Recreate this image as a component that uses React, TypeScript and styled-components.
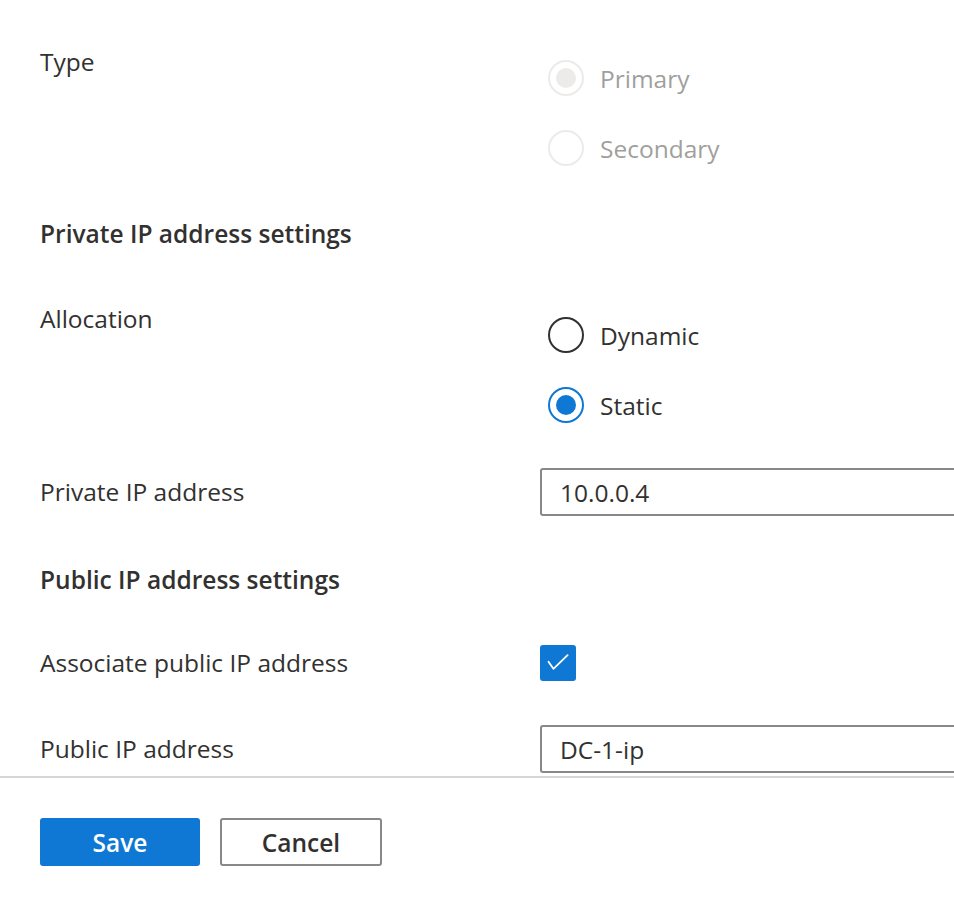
import React from "react";
import styled, { createGlobalStyle } from "styled-components";

const GlobalStyle = createGlobalStyle`
  html, body {
    margin: 0;
    padding: 0;
    background: #ffffff;
    overflow: hidden;
  }
  body {
    font-family: "Open Sans", "Noto Sans", "Liberation Sans", sans-serif;
    color: #323130;
    -webkit-font-smoothing: antialiased;
  }
`;

const Page = styled.div`
  width: 954px;
  height: 904px;
  display: flex;
  flex-direction: column;
  overflow: hidden;
`;

const Content = styled.div`
  height: 778px;
  overflow: hidden;
  display: flex;
  flex-direction: column;
  padding-top: 46px;
  box-sizing: border-box;
  border-bottom: 2px solid #d6d6d6;
  flex-shrink: 0;
`;

const Row = styled.div<{ $top?: number; $center?: boolean }>`
  display: grid;
  grid-template-columns: 500px 1fr;
  align-items: ${(p) => (p.$center ? "center" : "start")};
  margin-top: ${(p) => p.$top ?? 0}px;
  padding-left: 40px;
  flex-shrink: 0;
`;

const Label = styled.div`
  font-size: 24.5px;
  line-height: 32px;
  color: #323130;
`;

const Heading = styled.div<{ $top: number }>`
  margin-top: ${(p) => p.$top}px;
  padding-left: 40px;
  font-size: 24.5px;
  line-height: 32px;
  font-weight: 600;
  color: #323130;
  flex-shrink: 0;
`;

const RadioGroup = styled.div`
  display: flex;
  flex-direction: column;
  gap: 34px;
  margin-top: 14px;
  padding-left: 8px;
`;

const RadioItem = styled.div<{ $disabled?: boolean }>`
  display: flex;
  align-items: center;
  gap: 16px;
  height: 36px;
  font-size: 24.5px;
  color: ${(p) => (p.$disabled ? "#a19f9d" : "#323130")};
`;

const RadioCircle = styled.span<{ $state: "off" | "on" | "disabledOn" | "disabledOff" }>`
  width: 36px;
  height: 36px;
  box-sizing: border-box;
  border-radius: 50%;
  border: 2px solid
    ${(p) =>
      p.$state === "on"
        ? "#0f78d4"
        : p.$state === "off"
        ? "#323130"
        : "#edebe9"};
  display: flex;
  align-items: center;
  justify-content: center;
  flex-shrink: 0;
  &::after {
    content: "";
    width: 20px;
    height: 20px;
    border-radius: 50%;
    background: ${(p) =>
      p.$state === "on"
        ? "#0f78d4"
        : p.$state === "disabledOn"
        ? "#edebe9"
        : "transparent"};
  }
`;

const TextInput = styled.div`
  width: 560px;
  height: 48px;
  box-sizing: border-box;
  border: 2px solid #8a8886;
  border-radius: 3px;
  padding: 0 18px;
  display: flex;
  align-items: center;
  font-size: 24.5px;
  color: #323130;
`;

const CheckBox = styled.span`
  width: 36px;
  height: 36px;
  border-radius: 3px;
  background: #0f78d4;
  display: flex;
  align-items: center;
  justify-content: center;
`;

const Footer = styled.div`
  display: flex;
  gap: 20px;
  padding: 40px 0 0 40px;
`;

const Button = styled.button<{ $primary?: boolean }>`
  width: ${(p) => (p.$primary ? "160px" : "162px")};
  height: 48px;
  box-sizing: border-box;
  border-radius: 3px;
  font-family: inherit;
  font-size: 24.5px;
  font-weight: 600;
  cursor: pointer;
  background: ${(p) => (p.$primary ? "#0f78d4" : "#ffffff")};
  color: ${(p) => (p.$primary ? "#ffffff" : "#323130")};
  border: 2px solid ${(p) => (p.$primary ? "#0f78d4" : "#8a8886")};
  padding: 0;
`;

const Radio: React.FC<{
  label: string;
  state: "off" | "on" | "disabledOn" | "disabledOff";
}> = ({ label, state }) => (
  <RadioItem $disabled={state === "disabledOn" || state === "disabledOff"}>
    <RadioCircle $state={state} />
    <span>{label}</span>
  </RadioItem>
);

export default function App() {
  return (
    <Page>
      <GlobalStyle />
      <Content>
        <Row>
          <Label>Type</Label>
          <RadioGroup>
            <Radio label="Primary" state="disabledOn" />
            <Radio label="Secondary" state="disabledOff" />
          </RadioGroup>
        </Row>
        <Heading $top={52}>Private IP address settings</Heading>
        <Row $top={53}>
          <Label>Allocation</Label>
          <RadioGroup>
            <Radio label="Dynamic" state="off" />
            <Radio label="Static" state="on" />
          </RadioGroup>
        </Row>
        <Row $top={45} $center>
          <Label>Private IP address</Label>
          <TextInput>10.0.0.4</TextInput>
        </Row>
        <Heading $top={48}>Public IP address settings</Heading>
        <Row $top={49} $center>
          <Label>Associate public IP address</Label>
          <CheckBox>
            <svg width="36" height="36" viewBox="0 0 36 36" fill="none">
              <path
                d="M8.5 16.8 L13.4 23.8 L27.6 10.2"
                stroke="#ffffff"
                strokeWidth="1.8"
                strokeLinecap="round"
                strokeLinejoin="round"
              />
            </svg>
          </CheckBox>
        </Row>
        <Row $top={44} $center>
          <Label>Public IP address</Label>
          <TextInput>DC-1-ip</TextInput>
        </Row>
      </Content>
      <Footer>
        <Button $primary>Save</Button>
        <Button>Cancel</Button>
      </Footer>
    </Page>
  );
}
